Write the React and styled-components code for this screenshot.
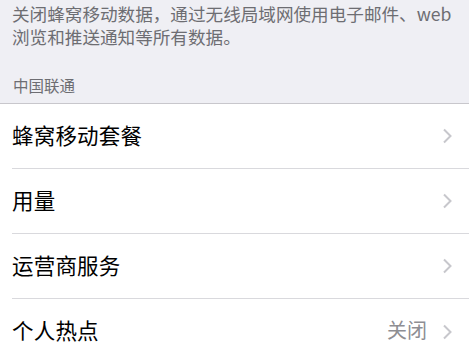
import React from 'react';
import styled, { createGlobalStyle } from 'styled-components';

const GlobalStyle = createGlobalStyle`
  body {
    margin: 0;
    background: #efeff4;
    font-family: 'Noto Sans CJK SC', 'Noto Sans', sans-serif;
  }
`;

const Page = styled.div`
  width: 469px;
  height: 351px;
  overflow: hidden;
  background: #efeff4;
`;

const Note = styled.p`
  margin: 0;
  padding: 2px 12px 0 12px;
  font-size: 17.6px;
  line-height: 23px;
  color: #6d6d72;
`;

const SectionTitle = styled.div`
  padding: 26px 12px 0 13px;
  height: 56px;
  box-sizing: border-box;
  font-size: 15.5px;
  line-height: 22px;
  color: #6d6d72;
  border-bottom: 1px solid #c8c7cc;
`;

const List = styled.div`
  background: #fff;
`;

const Row = styled.div`
  display: flex;
  align-items: center;
  height: 65px;
  padding-left: 12px;
`;

const RowInner = styled.div`
  flex: 1;
  display: flex;
  align-items: center;
  height: 100%;
  padding-right: 17px;
  padding-bottom: 4px;
  border-bottom: ${(p) => (p.last ? 'none' : '1px solid #d9d9dd')};
  box-sizing: border-box;
`;

const Label = styled.span`
  flex: 1;
  font-size: 21.5px;
  color: #000;
  letter-spacing: 0.2px;
`;

const Value = styled.span`
  font-size: 20px;
  color: #8e8e93;
  margin-right: 15px;
`;

const Chevron = () => (
  <svg width="10" height="16" viewBox="0 0 10 16" style={{ marginTop: 4 }}>
    <path d="M2 1.5 L8.5 8 L2 14.5" fill="none" stroke="#c7c7cc" strokeWidth="2" />
  </svg>
);

const items = [
  { label: '蜂窝移动套餐' },
  { label: '用量' },
  { label: '运营商服务' },
  { label: '个人热点', value: '关闭' },
];

export default function App() {
  return (
    <Page>
      <GlobalStyle />
      <Note>
        关闭蜂窝移动数据，通过无线局域网使用电子邮件、web
        <br />
        浏览和推送通知等所有数据。
      </Note>
      <SectionTitle>中国联通</SectionTitle>
      <List>
        {items.map((it, i) => (
          <Row key={it.label}>
            <RowInner last={i === items.length - 1}>
              <Label>{it.label}</Label>
              {it.value && <Value>{it.value}</Value>}
              <Chevron />
            </RowInner>
          </Row>
        ))}
      </List>
    </Page>
  );
}
